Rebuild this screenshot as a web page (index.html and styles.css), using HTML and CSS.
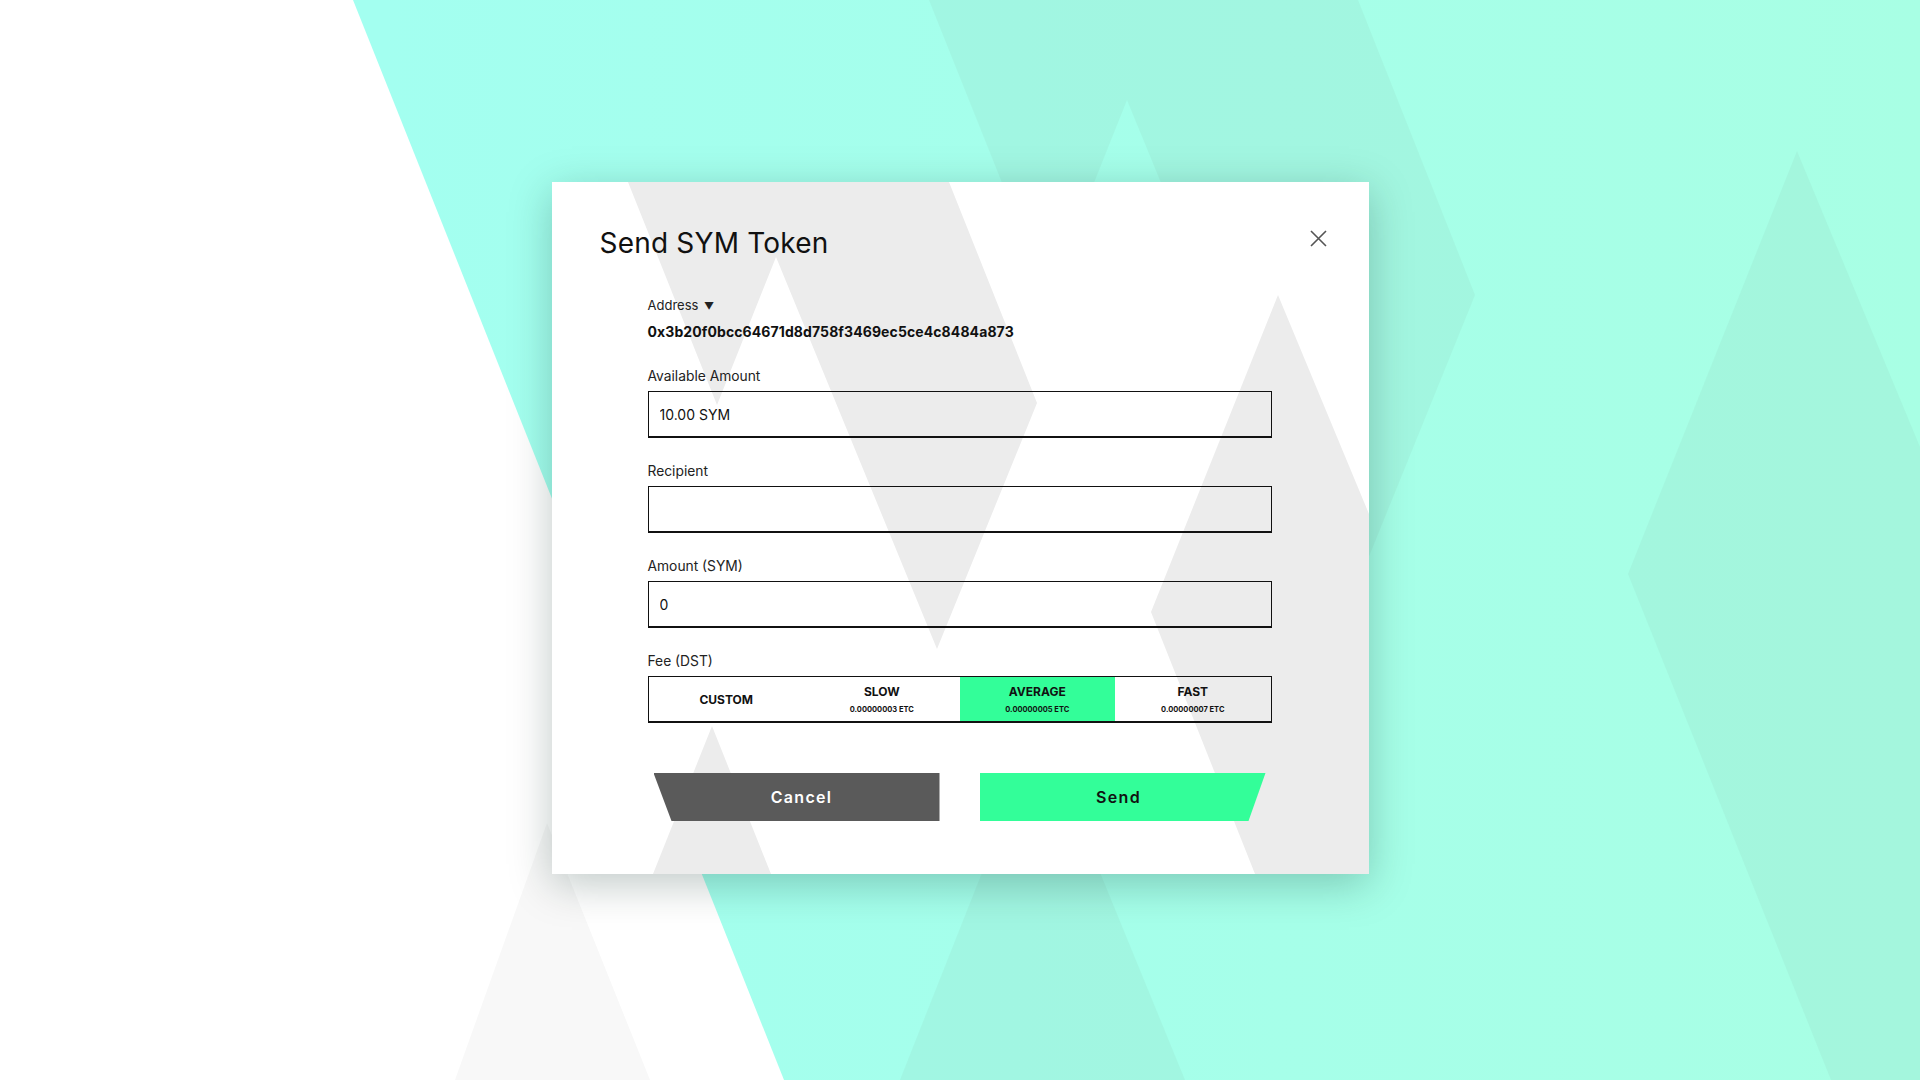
FILE: index.html
```html
<!DOCTYPE html>
<html lang="en">

    <head>
        <meta charset="UTF-8">
        <meta name="viewport" content="width=device-width, initial-scale=1.0">
        <title>Send SYM Token</title>
        <link rel="stylesheet" href="styles.css">
    </head>

    <body>
        <svg class="backdrop" viewBox="0 0 1920 1080" preserveAspectRatio="none">
            <defs>
                <linearGradient id="sea" x1="0" x2="1" y1="0" y2="0">
                    <stop offset="0.2" stop-color="#a3fff0" />
                    <stop offset="1" stop-color="#a8ffe4" />
                </linearGradient>
            </defs>
            <rect width="1920" height="1080" fill="url(#sea)" />
            <polygon class="shade" points="929,0 1358,0 1475,295 1342,623 1127,100 1048,298" />
            <polygon class="shade" points="1797,151 2183,1080 1831,1080 1628,574" />
            <polygon class="shade" points="1040,726 1185,1080 900,1080" />
            <polygon fill="#ffffff" points="0,0 353,0 784,1080 0,1080" />
            <polygon fill="#f8f8f8" points="547,823 650,1080 455,1080" />
        </svg>

        <div id="screen">
            <div id="modal">
                <svg class="pattern" viewBox="0 0 817 692" preserveAspectRatio="none">
                    <polygon points="76,0 397,0 485,221 385,467 224,75 165,223" />
                    <polygon points="726,113 817,332 817,692 703,692 599,430" />
                    <polygon points="160,544 219,692 101,692" />
                </svg>

                <div class="head">
                    <h1>Send SYM Token</h1>
                    <button class="close" type="button" aria-label="Close">
                        <svg width="17" height="17" viewBox="0 0 17 17">
                            <path d="M1 1L16 16M16 1L1 16" stroke="#555" stroke-width="1.6" fill="none" />
                        </svg>
                    </button>
                </div>

                <form class="fields" onsubmit="event.preventDefault()">
                    <div class="address-label">Address <span class="caret">&#9660;</span></div>
                    <div class="address">0x3b20f0bcc64671d8d758f3469ec5ce4c8484a873</div>

                    <label>Available Amount</label>
                    <input class="input-field" type="text" value="10.00 SYM" readonly />

                    <label>Recipient</label>
                    <input class="input-field" type="text" />

                    <label>Amount (SYM)</label>
                    <input class="input-field" type="text" value="0" />

                    <label>Fee (DST)</label>
                    <div class="fee">
                        <div class="fee-opt"><b>CUSTOM</b></div>
                        <div class="fee-opt"><b>SLOW</b><small>0.00000003 ETC</small></div>
                        <div class="fee-opt active"><b>AVERAGE</b><small>0.00000005 ETC</small></div>
                        <div class="fee-opt"><b>FAST</b><small>0.00000007 ETC</small></div>
                    </div>

                    <div class="actions">
                        <button class="btn-cancel" type="button">Cancel</button>
                        <button class="btn-send" type="submit">Send</button>
                    </div>
                </form>
            </div>
        </div>
    </body>

</html>
```

FILE: styles.css
```css
*{
    margin:0;
    padding:0;
    box-sizing:border-box;
    font-family: Inter, "Liberation Sans", sans-serif;
}
body{
    width:1920px;
    height:1080px;
    overflow:hidden;
    position:relative;
    background:#a3fff0;
}
.backdrop{
    position:absolute;
    left:0;
    top:0;
    width:1920px;
    height:1080px;
}
.shade{
    fill: rgba(150,215,195,0.22);
}
#screen{
    position:relative;
    width:100%;
    height:100%;
    display:flex;
    justify-content:center;
    align-items:center;
}
#modal{
    position:relative;
    width:817px;
    height:692px;
    margin-bottom:24px;
    background-color:#ffffff;
    box-shadow: 0 10px 40px rgba(0,40,30,0.25);
    overflow:hidden;
}
.pattern{
    position:absolute;
    left:0;
    top:0;
    width:817px;
    height:692px;
    fill:#ececec;
}
.head{
    position:relative;
    display:flex;
    justify-content:space-between;
    align-items:flex-start;
    padding:44px 42px 0 48px;
}
.head>h1{
    font-size:28px;
    line-height:34px;
    font-weight:400;
    color:#111;
    letter-spacing:0.2px;
}
.close{
    margin-top:4px;
    width:17px;
    height:17px;
    border:none;
    background:none;
    display:flex;
}
.fields{
    position:relative;
    display:flex;
    flex-direction:column;
    padding:37px 97px 0 96px;
}
.address-label{
    font-size:13px;
    line-height:16px;
    color:#222;
}
.caret{
    font-size:10px;
    margin-left:2px;
}
.address{
    margin-top:9px;
    font-size:14px;
    line-height:18px;
    font-weight:700;
    letter-spacing:0.1px;
    color:#111;
    margin-bottom:27px;
}
.fields>label{
    font-size:13.8px;
    line-height:16px;
    color:#222;
    margin-bottom:7px;
}
.input-field{
    width:100%;
    height:47px;
    border:1px solid #111;
    border-bottom-width:2px;
    background:transparent;
    padding-left:11px;
    font-size:14px;
    color:#111;
    margin-bottom:25px;
    outline:none;
}
.fee{
    display:grid;
    grid-template-columns:repeat(4, 1fr);
    height:47px;
    border:1px solid #111;
    border-bottom-width:2px;
}
.fee-opt{
    display:flex;
    flex-direction:column;
    justify-content:center;
    align-items:center;
    gap:7px;
    color:#111;
}
.fee-opt>b{
    font-size:12px;
    line-height:13px;
    font-weight:700;
}
.fee-opt>small{
    font-size:7.5px;
    line-height:9px;
    font-weight:700;
}
.fee-opt.active{
    background-color:#33fe99;
}
.actions{
    display:flex;
    justify-content:center;
    gap:40px;
    margin-top:50px;
}
.actions>button{
    width:286px;
    height:48px;
    border:none;
    font-size:16px;
    font-weight:600;
    letter-spacing:1.3px;
}
.btn-cancel{
    background-color:#5a5a5a;
    color:#fff;
    padding-left:10px;
    clip-path:polygon(0 0, 100% 0, 100% 100%, 18px 100%);
}
.btn-send{
    background-color:#33fe99;
    color:#111;
    padding-right:8px;
    clip-path:polygon(0 0, 100% 0, calc(100% - 17px) 100%, 0 100%);
}
```
